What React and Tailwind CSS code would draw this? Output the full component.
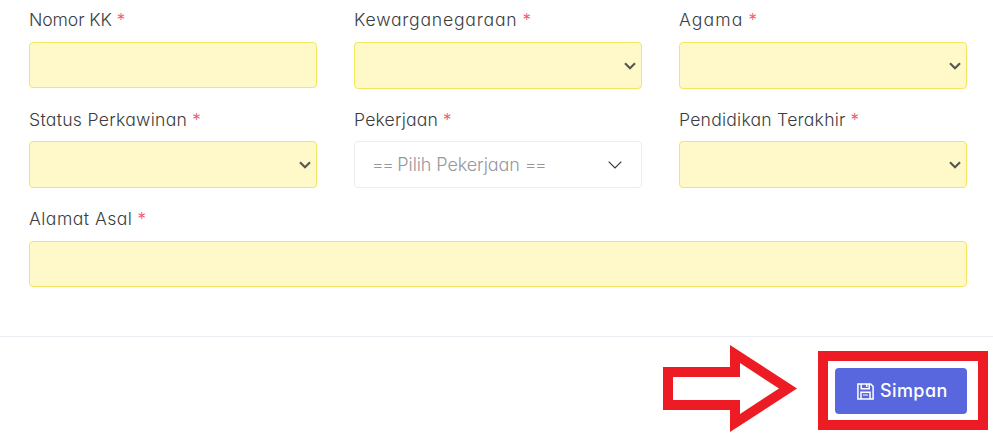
function Label({ children, tracking }) {
  return (
    <label className="flex h-[25px] items-start whitespace-nowrap text-[17.6px] leading-[24px] text-[#3a3d42]">
      <span className={tracking}>{children}</span>
      <span className="ml-[5px] text-[17px] text-[#f4516c]">*</span>
    </label>
  );
}

function Chevron() {
  return (
    <svg width="12" height="8" viewBox="0 0 12 8" fill="none" stroke="#55564f" strokeWidth="2.1">
      <path d="M1 1.2 6 6.2 11 1.2" />
    </svg>
  );
}

const box = "flex items-center justify-end rounded-[4px] border border-[#f3e760] bg-[#fff8c9] pr-[5px]";

function SelectField({ label, tracking, gap = "gap-[9px]" }) {
  return (
    <div className={`flex flex-col ${gap}`}>
      <Label tracking={tracking}>{label}</Label>
      <div className={`${box} h-[47px]`}>
        <Chevron />
      </div>
    </div>
  );
}

function InputField({ label, tracking }) {
  return (
    <div className="flex flex-col gap-[9px]">
      <Label tracking={tracking}>{label}</Label>
      <div className={`${box} h-[46px]`} />
    </div>
  );
}

export default function App() {
  return (
    <div className="h-[438px] w-[993px] overflow-hidden bg-white font-[Inter,'Open_Sans',sans-serif] font-light [font-feature-settings:'cv11']">
      <form className="flex h-[337px] flex-col border-b border-[#ebedf2] px-[29px] pt-[8px] pr-[26px]">
        <div className="grid grid-cols-3 gap-x-[37px]">
          <div className="h-[100px]">
            <InputField label="Nomor KK" tracking="tracking-[-0.1px]" />
          </div>
          <div className="h-[100px]">
            <SelectField label="Kewarganegaraan" tracking="tracking-[0.78px]" />
          </div>
          <div className="h-[100px]">
            <SelectField label="Agama" tracking="tracking-[1.1px]" />
          </div>
          <div className="h-[99px]">
            <SelectField label="Status Perkawinan" tracking="tracking-[0.29px]" gap="gap-[8px]" />
          </div>
          <div className="flex h-[99px] flex-col gap-[8px]">
            <Label tracking="tracking-[0.18px]">Pekerjaan</Label>
            <div className="flex h-[47px] items-center justify-between rounded-[4px] border border-[#ebedf2] pr-[19px] pl-[17px]">
              <span className="flex gap-[5px] whitespace-nowrap pb-px text-[18px] text-[#96979c]">
                <span className="tracking-[-1.6px]">==</span>
                <span className="tracking-[-0.1px]">Pilih Pekerjaan</span>
                <span className="tracking-[-1.6px]">==</span>
              </span>
              <svg width="14" height="8" viewBox="0 0 14 8" fill="none" stroke="#333" strokeWidth="1.1">
                <path d="M.7.7 7 7 13.3.7" />
              </svg>
            </div>
          </div>
          <div className="h-[99px]">
            <SelectField label="Pendidikan Terakhir" tracking="tracking-[0.22px]" gap="gap-[8px]" />
          </div>
        </div>
        <InputField label="Alamat Asal" tracking="tracking-[0.46px]" />
      </form>
      <footer className="flex items-start justify-end pt-[8px] pr-[5px]">
        <svg className="mr-[21px]" width="134" height="88" viewBox="0 0 134 88">
          <path
            fill="#ed1c24"
            fillRule="evenodd"
            d="M0 22H67V0L134 43.5 67 87V65H0ZM10 32V55H77V69L116 43.5 77 18V32Z"
          />
        </svg>
        <div className="mt-[6px] h-[79px] w-[170px] border-[10px] border-[#ed1c24] pt-[7px] pl-[7px]">
          <button className="flex h-[46px] w-[132px] items-center rounded-[4px] bg-[#5867dd] pl-[22px] text-[18px] font-medium text-white">
            <svg className="mr-[6px] shrink-0" width="17" height="17" viewBox="0 0 17 17" fill="none" stroke="white" strokeWidth="1.5">
              <path d="M.9.9H13.6L16.1 3.4V16.1H.9ZM4.2 .9V5.8H12.2V.9M4 16V9.2H13V16" />
              <path d="M9.8 1V4" strokeWidth="1.4" />
              <path d="M6 12H11" strokeWidth="1" />
            </svg>
            <span className="pb-px tracking-[0.4px]">Simpan</span>
          </button>
        </div>
      </footer>
    </div>
  );
}
